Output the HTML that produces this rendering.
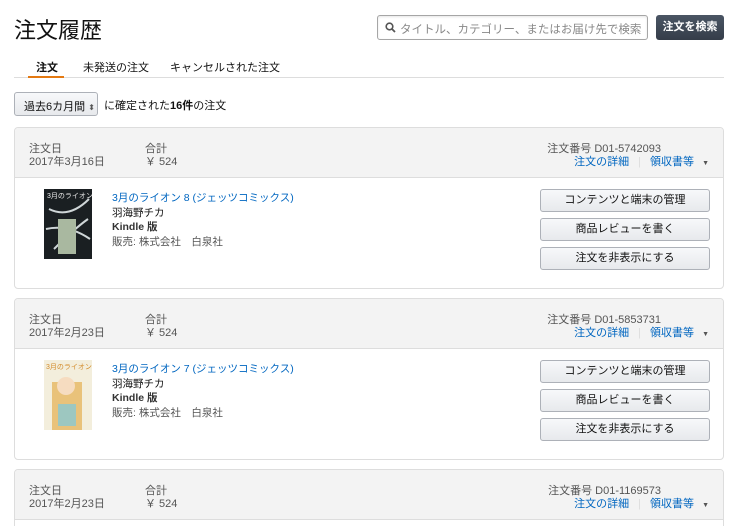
<!DOCTYPE html>
<html><head><meta charset="utf-8"><style>
*{box-sizing:border-box;margin:0;padding:0}
html,body{width:734px;height:526px;overflow:hidden}
body{background:#fff;font-family:"Liberation Sans","Noto Sans CJK JP",sans-serif;color:#111;font-size:11px;position:relative}
.a{position:absolute;white-space:nowrap}
h1{position:absolute;left:14px;top:13px;font-size:22px;font-weight:normal;color:#111}
.search{position:absolute;left:377px;top:15px;width:271px;height:25px;border:1px solid #a6a6a6;border-radius:3px;box-shadow:inset 0 1px 2px rgba(0,0,0,.1);color:#888;font-size:11.5px;padding:5px 0 0 22px}
.sbtn{position:absolute;left:656px;top:15px;width:68px;height:25px;background:linear-gradient(#4a5564,#353d49);border-radius:3px;color:#fff;font-weight:bold;font-size:11px;text-align:center;line-height:25px}
.tabline{position:absolute;left:14px;top:77px;width:710px;height:1px;background:#ddd}
.tabsel{position:absolute;left:28px;top:76px;width:36px;height:2px;background:#e47911}
.sel{position:absolute;left:14px;top:92px;width:84px;height:24px;border:1px solid #adb1b8;border-radius:3px;background:linear-gradient(#f7f8fa,#e7e9ec);font-size:11px;padding:5px 0 0 9px}
.card{position:absolute;left:14px;width:710px;border:1px solid #ddd;border-radius:4px;overflow:hidden}
.hd{height:50px;background:#f3f3f3;border-bottom:1px solid #ddd;position:relative;color:#555}
.bd{height:110px;position:relative}
.bd .a{font-size:10.5px}
.lnk{color:#0066c0}
.btn{position:absolute;left:525px;width:170px;height:23px;border:1px solid #adb1b8;border-radius:3px;background:linear-gradient(#f7f8fa,#e7e9ec);text-align:center;line-height:21px;font-size:11px;color:#111}
.cov{position:absolute;left:29px;top:11px;width:48px;height:70px}
</style></head><body>
<h1>注文履歴</h1>
<div class="search"><svg style="position:absolute;left:7px;top:6px" width="11" height="11" viewBox="0 0 11 11"><circle cx="4.5" cy="4.5" r="3.3" fill="none" stroke="#555" stroke-width="1.6"/><path d="M7 7l3 3" stroke="#555" stroke-width="1.8"/></svg>タイトル、カテゴリー、またはお届け先で検索</div>
<div class="sbtn">注文を検索</div>
<div class="a" style="left:36px;top:59px;font-weight:bold">注文</div>
<div class="a" style="left:83px;top:59px">未発送の注文</div>
<div class="a" style="left:170px;top:59px">キャンセルされた注文</div>
<div class="tabline"></div><div class="tabsel"></div>
<div class="sel">過去6カ月間 <span style="font-size:8px;color:#555">⬍</span></div>
<div class="a" style="left:104px;top:97px">に確定された<b>16件</b>の注文</div>

<div class="card" style="top:127px;height:162px">
<div class="hd"><div class="a" style="left:14px;top:12px">注文日</div><div class="a" style="left:14px;top:25px">2017年3月16日</div><div class="a" style="left:130px;top:12px">合計</div><div class="a" style="left:130px;top:25px">￥ 524</div><div class="a" style="right:62px;top:12px">注文番号 D01-5742093</div><div class="a" style="right:14px;top:25px"><span class="lnk">注文の詳細</span><span style="color:#ddd;margin:0 9px">|</span><span class="lnk">領収書等</span> <span style="font-size:7px;color:#555;margin-left:5px">▼</span></div></div>
<div class="bd"><svg class="cov" viewBox="0 0 48 70"><rect width="48" height="70" fill="#1a1f22"/><path d="M5 20Q25 30 45 10M2 40Q24 35 46 50M10 60Q30 40 44 30" stroke="#cfd6d8" stroke-width="2" fill="none"/><rect x="14" y="30" width="18" height="35" fill="#a9b8a0"/><text x="3" y="9" font-size="7" fill="#eee">3月のライオン</text></svg>
<div class="a lnk" style="left:97px;top:12px">3月のライオン 8 (ジェッツコミックス)</div><div class="a" style="left:97px;top:27px">羽海野チカ</div><div class="a" style="left:97px;top:41px;font-weight:bold;color:#333">Kindle 版</div><div class="a" style="left:97px;top:56px;color:#555">販売: 株式会社　白泉社</div>
<div class="btn" style="top:11px">コンテンツと端末の管理</div><div class="btn" style="top:40px">商品レビューを書く</div><div class="btn" style="top:69px">注文を非表示にする</div></div></div>

<div class="card" style="top:298px;height:162px">
<div class="hd"><div class="a" style="left:14px;top:12px">注文日</div><div class="a" style="left:14px;top:25px">2017年2月23日</div><div class="a" style="left:130px;top:12px">合計</div><div class="a" style="left:130px;top:25px">￥ 524</div><div class="a" style="right:62px;top:12px">注文番号 D01-5853731</div><div class="a" style="right:14px;top:25px"><span class="lnk">注文の詳細</span><span style="color:#ddd;margin:0 9px">|</span><span class="lnk">領収書等</span> <span style="font-size:7px;color:#555;margin-left:5px">▼</span></div></div>
<div class="bd"><svg class="cov" viewBox="0 0 48 70"><rect width="48" height="70" fill="#f3eedc"/><rect x="8" y="22" width="30" height="48" fill="#e9c27a"/><circle cx="22" cy="26" r="9" fill="#f6dcc0"/><rect x="14" y="44" width="18" height="22" fill="#9dc7c0"/><text x="2" y="9" font-size="7" fill="#d38b2a">3月のライオン</text></svg>
<div class="a lnk" style="left:97px;top:12px">3月のライオン 7 (ジェッツコミックス)</div><div class="a" style="left:97px;top:27px">羽海野チカ</div><div class="a" style="left:97px;top:41px;font-weight:bold;color:#333">Kindle 版</div><div class="a" style="left:97px;top:56px;color:#555">販売: 株式会社　白泉社</div>
<div class="btn" style="top:11px">コンテンツと端末の管理</div><div class="btn" style="top:40px">商品レビューを書く</div><div class="btn" style="top:69px">注文を非表示にする</div></div></div>

<div class="card" style="top:469px;height:80px">
<div class="hd"><div class="a" style="left:14px;top:12px">注文日</div><div class="a" style="left:14px;top:25px">2017年2月23日</div><div class="a" style="left:130px;top:12px">合計</div><div class="a" style="left:130px;top:25px">￥ 524</div><div class="a" style="right:62px;top:12px">注文番号 D01-1169573</div><div class="a" style="right:14px;top:25px"><span class="lnk">注文の詳細</span><span style="color:#ddd;margin:0 9px">|</span><span class="lnk">領収書等</span> <span style="font-size:7px;color:#555;margin-left:5px">▼</span></div></div></div>
</body></html>
